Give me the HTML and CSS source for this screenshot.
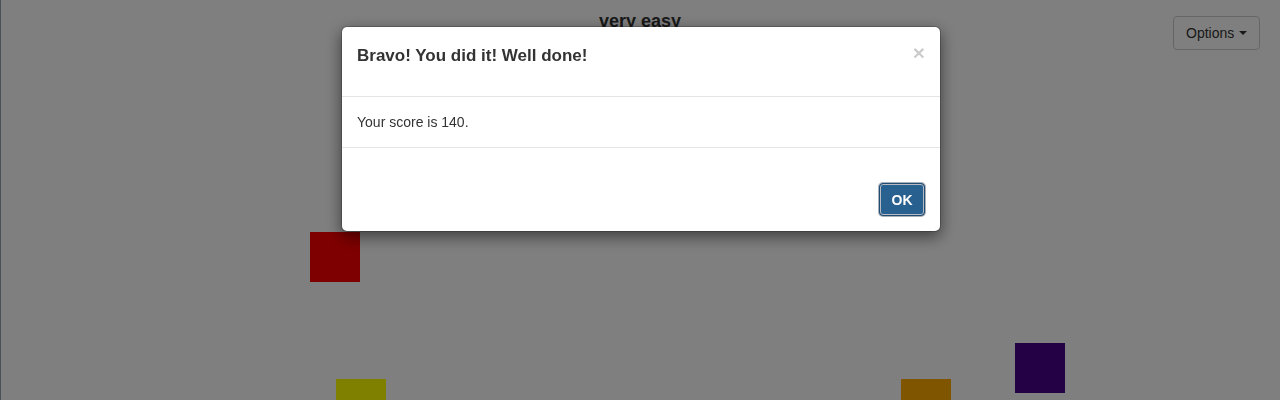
FILE: index.html
```html
<!DOCTYPE html>
<html>
<head>
<meta charset="utf-8">
<link rel="stylesheet" href="styles.css">
</head>
<body>
<div class="page">
  <header class="topbar">
    <h1 class="level">very easy</h1>
    <button class="options-btn">Options <span class="caret"></span></button>
  </header>
  <div class="board">
    <div class="tile tile-red" style="left:310px;top:232px"></div>
    <div class="tile tile-yellow" style="left:336px;top:379px"></div>
    <div class="tile tile-orange" style="left:901px;top:379px"></div>
    <div class="tile tile-purple" style="left:1015px;top:343px"></div>
  </div>
</div>
<div class="backdrop"></div>
<div class="modal">
  <div class="modal-header">
    <h4 class="modal-title">Bravo! You did it! Well done!</h4>
    <span class="close">&times;</span>
  </div>
  <div class="modal-body">Your score is 140.</div>
  <div class="modal-footer">
    <button class="btn-ok">OK</button>
  </div>
</div>
</body>
</html>
```
FILE: styles.css
```css
html, body {
  margin: 0;
  padding: 0;
  height: 100%;
  overflow: hidden;
}
body {
  font-family: "Liberation Sans", Arial, sans-serif;
  font-size: 14px;
  color: #333;
  background: #fff;
}
.page {
  position: relative;
  height: 400px;
  overflow: hidden;
}
.page::before {
  content: "";
  position: absolute;
  left: 0;
  top: 0;
  bottom: 0;
  width: 1px;
  background: #94a0ae;
}
.topbar {
  display: flex;
  justify-content: center;
  position: relative;
  padding-top: 10px;
}
.level {
  margin: 0;
  font-size: 18px;
  line-height: 22px;
  font-weight: bold;
  color: #333;
}
.options-btn {
  position: absolute;
  right: 20px;
  top: 16px;
  width: 87px;
  height: 34px;
  box-sizing: border-box;
  border: 1px solid #ccc;
  border-radius: 4px;
  background: #fff;
  font-family: "Liberation Sans", Arial, sans-serif;
  font-size: 14px;
  color: #333;
  padding: 0 12px;
  display: flex;
  align-items: center;
  gap: 5px;
}
.caret {
  display: inline-block;
  width: 0;
  height: 0;
  border-top: 4px solid #333;
  border-left: 4px solid transparent;
  border-right: 4px solid transparent;
}
.board {
  position: absolute;
  inset: 0;
}
.tile {
  position: absolute;
  width: 50px;
  height: 50px;
}
.tile-red { background: #ff0000; }
.tile-yellow { background: #ffff00; }
.tile-orange { background: #ffaa00; }
.tile-purple { background: #480088; }
.backdrop {
  position: fixed;
  inset: 0;
  background: rgba(0, 0, 0, 0.5);
}
.modal {
  position: fixed;
  top: 26px;
  left: 341px;
  width: 600px;
  box-sizing: border-box;
  background: #fff;
  border: 1px solid rgba(0, 0, 0, 0.2);
  border-radius: 6px;
  box-shadow: 0 5px 15px rgba(0, 0, 0, 0.5);
  background-clip: padding-box;
}
.modal-header {
  position: relative;
  height: 70px;
  box-sizing: border-box;
  padding: 16px 15px 0;
  border-bottom: 1px solid #e5e5e5;
}
.modal-title {
  margin: 0;
  font-size: 17px;
  line-height: 26px;
  font-weight: bold;
  color: #333;
}
.close {
  position: absolute;
  right: 15px;
  top: 15px;
  font-size: 21px;
  font-weight: bold;
  line-height: 21px;
  color: #000;
  opacity: 0.2;
}
.modal-body {
  padding: 15px;
  line-height: 20px;
  border-bottom: 1px solid #e5e5e5;
}
.modal-footer {
  display: flex;
  justify-content: flex-end;
  padding: 35px 15px 15px;
}
.btn-ok {
  width: 46px;
  height: 33px;
  box-sizing: border-box;
  border: 1px solid #204d74;
  border-radius: 4px;
  background: #286090;
  color: #fff;
  font-family: "Liberation Sans", Arial, sans-serif;
  font-size: 14px;
  font-weight: bold;
  box-shadow: 0 0 0 1px #a9b0b8, inset 0 0 0 1px #b8bcc2;
  padding: 0;
}
```
